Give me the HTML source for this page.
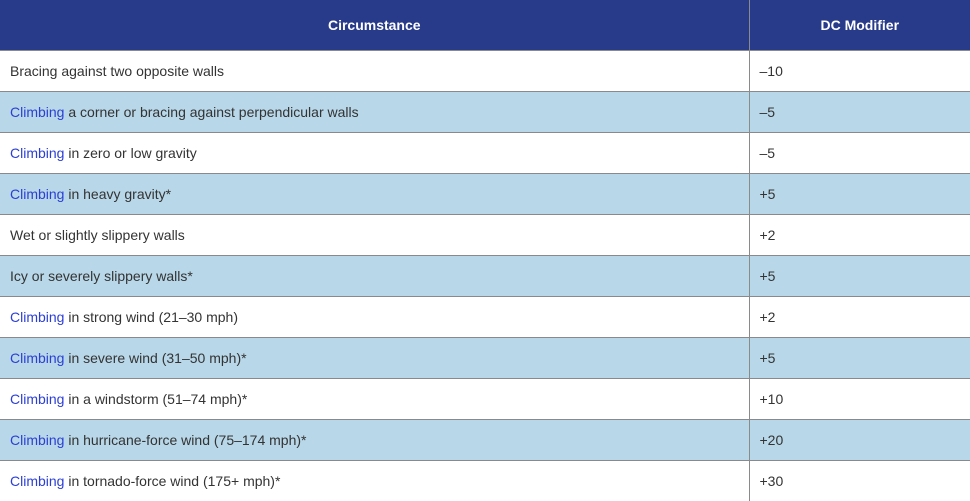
<!DOCTYPE html><html><head><style>
body{margin:0;width:970px;height:497px;overflow:hidden;background:#fff;font-family:"Liberation Sans",Arial,sans-serif;font-size:14px;color:#333}
table{border-collapse:collapse;width:970px;table-layout:fixed}
th{background:#283b8b;color:#fff;font-weight:bold;height:50px;padding:0;text-align:center;font-size:14px}
th+th{border-left:1px solid #8a8a8a}
td{height:40px;padding:0 10px;border-top:1px solid #8a8a8a}
td+td{border-left:1px solid #8a8a8a}
tr:nth-child(odd) td{background:#b8d7e8}
a{color:#2b3fd6;text-decoration:none}
</style></head><body><table>
<colgroup><col style="width:749px"><col></colgroup>
<tr><th>Circumstance</th><th>DC Modifier</th></tr>
<tr><td>Bracing against two opposite walls</td><td>–10</td></tr>
<tr><td><a>Climbing</a> a corner or bracing against perpendicular walls</td><td>–5</td></tr>
<tr><td><a>Climbing</a> in zero or low gravity</td><td>–5</td></tr>
<tr><td><a>Climbing</a> in heavy gravity*</td><td>+5</td></tr>
<tr><td>Wet or slightly slippery walls</td><td>+2</td></tr>
<tr><td>Icy or severely slippery walls*</td><td>+5</td></tr>
<tr><td><a>Climbing</a> in strong wind (21–30 mph)</td><td>+2</td></tr>
<tr><td><a>Climbing</a> in severe wind (31–50 mph)*</td><td>+5</td></tr>
<tr><td><a>Climbing</a> in a windstorm (51–74 mph)*</td><td>+10</td></tr>
<tr><td><a>Climbing</a> in hurricane-force wind (75–174 mph)*</td><td>+20</td></tr>
<tr><td><a>Climbing</a> in tornado-force wind (175+ mph)*</td><td>+30</td></tr>
</table></body></html>
